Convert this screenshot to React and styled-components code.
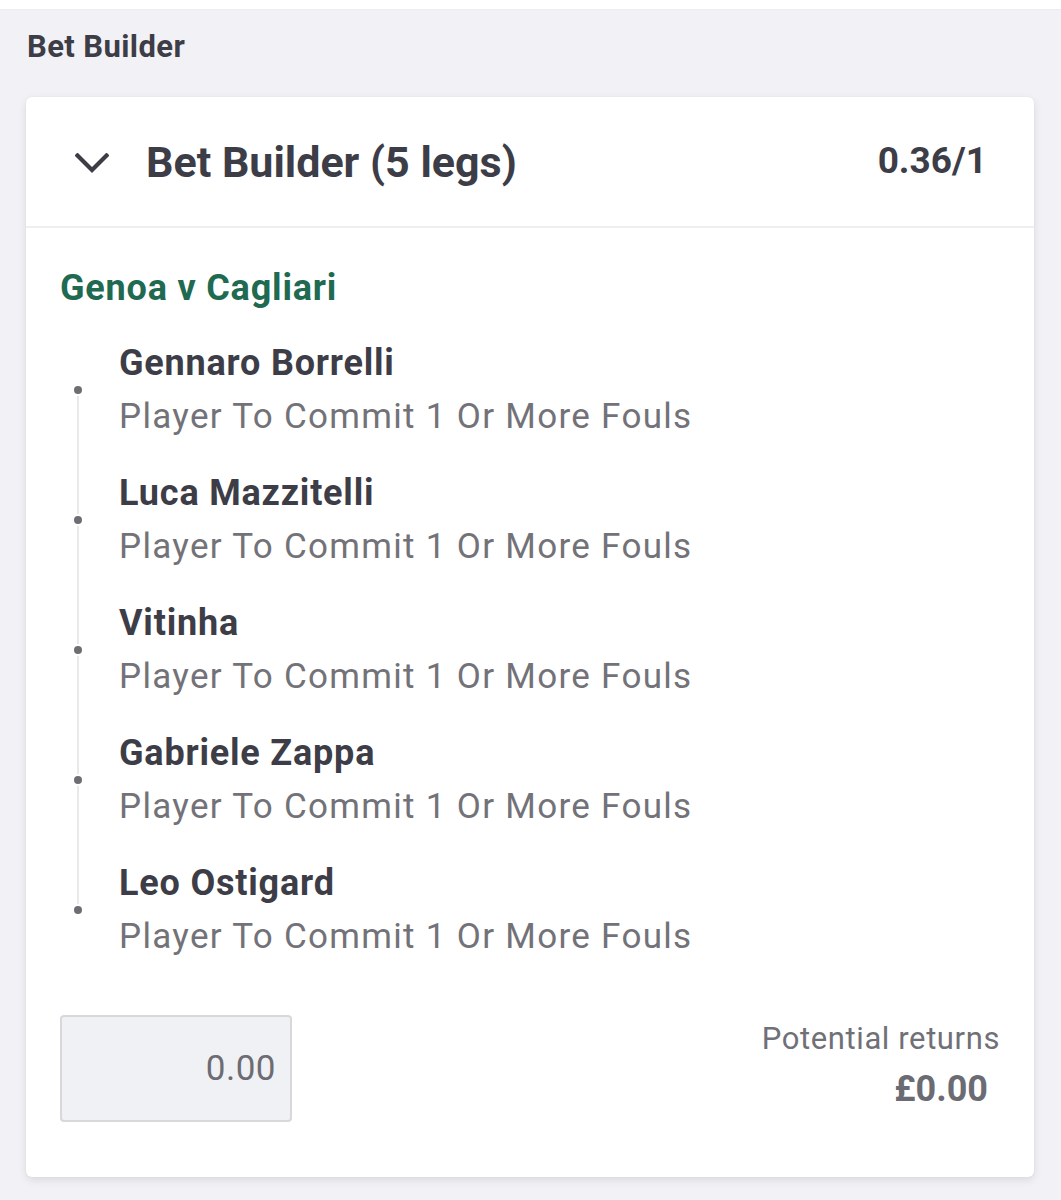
import React from 'react'
import styled, { createGlobalStyle } from 'styled-components'

const legs = [
  { name: 'Gennaro Borrelli', market: 'Player To Commit 1 Or More Fouls' },
  { name: 'Luca Mazzitelli', market: 'Player To Commit 1 Or More Fouls' },
  { name: 'Vitinha', market: 'Player To Commit 1 Or More Fouls' },
  { name: 'Gabriele Zappa', market: 'Player To Commit 1 Or More Fouls' },
  { name: 'Leo Ostigard', market: 'Player To Commit 1 Or More Fouls' },
]

function Chevron() {
  return (
    <svg width="34" height="20" viewBox="0 0 34 20">
      <polyline
        points="2.5,2.5 17,17 31.5,2.5"
        fill="none"
        stroke="#3d3d47"
        strokeWidth="4.2"
        strokeLinecap="square"
      />
    </svg>
  )
}

function App() {
  return (
    <>
      <GlobalStyle />
      <TopStrip />
      <Page>
        <PageTitle>Bet Builder</PageTitle>
        <Card>
          <CardHeader>
            <Toggle>
              <Chevron />
            </Toggle>
            <Title>Bet Builder (5 legs)</Title>
            <Odds>0.36/1</Odds>
          </CardHeader>
          <CardBody>
            <EventName>Genoa v Cagliari</EventName>
            <LegList>
              {legs.map((leg) => (
                <Leg key={leg.name}>
                  <Bullet />
                  <LegName>{leg.name}</LegName>
                  <LegMarket>{leg.market}</LegMarket>
                </Leg>
              ))}
            </LegList>
            <StakeRow>
              <StakeInput>0.00</StakeInput>
              <Returns>
                <ReturnsLabel>Potential returns</ReturnsLabel>
                <ReturnsAmount>£0.00</ReturnsAmount>
              </Returns>
            </StakeRow>
          </CardBody>
        </Card>
      </Page>
    </>
  )
}

const GlobalStyle = createGlobalStyle`
  * {
    box-sizing: border-box;
  }
  body {
    margin: 0;
    background: #f2f2f6;
    font-family: Roboto, 'Noto Sans', 'Liberation Sans', sans-serif;
    color: #3d3d47;
  }
`

const TopStrip = styled.div`
  height: 10px;
  background: #ffffff;
  border-bottom: 1px solid #ececf0;
`

const Page = styled.div`
  padding: 20px 27px 23px 26px;
`

const PageTitle = styled.h1`
  margin: 0 0 33px 1px;
  font-size: 31px;
  line-height: 34px;
  font-weight: 700;
  letter-spacing: 0.4px;
  color: #3d3d47;
`

const Card = styled.div`
  background: #ffffff;
  border-radius: 6px;
  box-shadow: 0 3px 8px rgba(0, 0, 0, 0.1), 0 0 2px rgba(0, 0, 0, 0.06);
`

const CardHeader = styled.div`
  display: flex;
  align-items: center;
  height: 131px;
  padding: 0 47px 0 49px;
  border-bottom: 2px solid #efeff2;
`

const Toggle = styled.div`
  display: flex;
  align-items: center;
  width: 34px;
  margin-right: 37px;
  margin-top: 2px;
`

const Title = styled.div`
  flex: 1;
  font-size: 43px;
  font-weight: 700;
  color: #3d3d47;
`

const Odds = styled.div`
  font-size: 37px;
  font-weight: 700;
  color: #3d3d47;
  margin-top: -3px;
`

const CardBody = styled.div`
  padding: 38px 34px 55px 34px;
`

const EventName = styled.div`
  font-size: 36px;
  line-height: 44px;
  font-weight: 700;
  letter-spacing: 0.8px;
  color: #206a51;
  margin-bottom: 28px;
`

const LegList = styled.div`
  position: relative;
  display: flex;
  flex-direction: column;
  gap: 22px;
  padding-left: 59px;

  &::before {
    content: '';
    position: absolute;
    left: 17px;
    top: 52px;
    bottom: 56px;
    width: 2px;
    background: #e9e9ec;
  }
`

const Leg = styled.div`
  position: relative;
`

const Bullet = styled.span`
  position: absolute;
  left: -45px;
  top: 48px;
  width: 8px;
  height: 8px;
  border-radius: 50%;
  background: #6d6d74;
  box-shadow: 0 0 0 2px #ffffff;
`

const LegName = styled.div`
  font-size: 36px;
  line-height: 50px;
  font-weight: 700;
  letter-spacing: 0.8px;
  color: #3d3d47;
`

const LegMarket = styled.div`
  font-size: 35px;
  line-height: 58px;
  font-weight: 400;
  letter-spacing: 1.3px;
  color: #727278;
`

const StakeRow = styled.div`
  display: flex;
  justify-content: space-between;
  align-items: flex-start;
  margin-top: 49px;
`

const StakeInput = styled.div`
  width: 232px;
  height: 107px;
  display: flex;
  align-items: center;
  justify-content: flex-end;
  padding-right: 14px;
  background: #f0f1f5;
  border: 2px solid #d8d8db;
  border-radius: 4px;
  font-size: 35px;
  letter-spacing: 0.5px;
  color: #6c6c72;
`

const Returns = styled.div`
  display: flex;
  flex-direction: column;
  align-items: flex-end;
  padding-top: 4px;
`

const ReturnsLabel = styled.div`
  font-size: 31px;
  line-height: 40px;
  letter-spacing: 0.6px;
  color: #707077;
`

const ReturnsAmount = styled.div`
  font-size: 36px;
  line-height: 60px;
  font-weight: 700;
  color: #6b6b73;
  padding-right: 12px;
`

export default App
